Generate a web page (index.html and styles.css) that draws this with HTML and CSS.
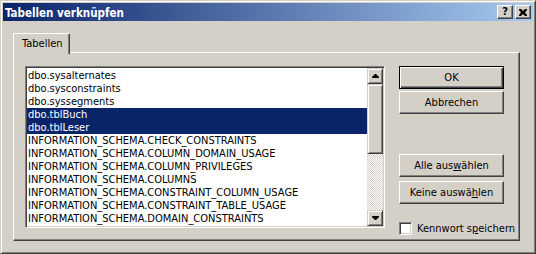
FILE: index.html
```html
<!DOCTYPE html>
<html lang="de">
<head>
<meta charset="utf-8">
<title>Tabellen verknüpfen</title>
<link rel="stylesheet" href="styles.css">
</head>
<body>
<div class="window">
  <div class="titlebar">
    <span class="title">Tabellen verknüpfen</span>
    <div class="caption-buttons">
      <span class="cap-btn help">?</span>
      <span class="cap-btn close"><svg width="8" height="7" viewBox="0 0 8 7"><path d="M0 0h2l2 2 2-2h2v1l-2 2.5 2 2.5v1h-2l-2-2-2 2h-2v-1l2-2.5-2-2.5z" fill="#000"/></svg></span>
    </div>
  </div>
  <div class="client">
    <div class="tabstrip"><div class="tab">Tabellen</div></div>
    <div class="panel">
      <div class="listbox">
        <ul class="items">
          <li>dbo.sysalternates</li>
          <li>dbo.sysconstraints</li>
          <li>dbo.syssegments</li>
          <li class="selected">dbo.tblBuch</li>
          <li class="selected">dbo.tblLeser</li>
          <li>INFORMATION_SCHEMA.CHECK_CONSTRAINTS</li>
          <li>INFORMATION_SCHEMA.COLUMN_DOMAIN_USAGE</li>
          <li>INFORMATION_SCHEMA.COLUMN_PRIVILEGES</li>
          <li>INFORMATION_SCHEMA.COLUMNS</li>
          <li>INFORMATION_SCHEMA.CONSTRAINT_COLUMN_USAGE</li>
          <li>INFORMATION_SCHEMA.CONSTRAINT_TABLE_USAGE</li>
          <li>INFORMATION_SCHEMA.DOMAIN_CONSTRAINTS</li>
        </ul>
        <div class="scrollbar">
          <div class="sb-btn"><svg width="7" height="4" viewBox="0 0 7 4"><path d="M3 0h1l3 3v1h-7v-1z" fill="#000"/></svg></div>
          <div class="sb-thumb"></div>
          <div class="sb-track"></div>
          <div class="sb-btn"><svg width="7" height="4" viewBox="0 0 7 4"><path d="M0 0h7v1l-3 3h-1l-3-3z" fill="#000"/></svg></div>
        </div>
      </div>
      <div class="side">
        <div class="btn default">OK</div>
        <div class="btn btn-cancel">Abbrechen</div>
        <div class="btn btn-all">Alle aus<u>w</u>ählen</div>
        <div class="btn btn-none">Keine auswä<u>h</u>len</div>
        <label class="check"><span class="box"></span><span class="check-label">Kennwort s<u>p</u>eichern</span></label>
      </div>
    </div>
  </div>
</div>
</body>
</html>
```

FILE: styles.css
```css
* { box-sizing: border-box; }
html, body { margin: 0; padding: 0; }
body {
  background: #d4d0c8;
  font-family: "DejaVu Sans Condensed", "DejaVu Sans", sans-serif;
  font-stretch: condensed;
  font-size: 11px;
  color: #000;
}
.window {
  width: 536px;
  height: 254px;
  border: 1px solid;
  border-color: #d4d0c8 #404040 #404040 #d4d0c8;
  box-shadow: inset 1px 1px #fff, inset -1px -1px #808080;
  padding: 2px;
  background: #d4d0c8;
}
.titlebar {
  height: 18px;
  display: flex;
  align-items: center;
  justify-content: space-between;
  padding: 0 2px;
  background: linear-gradient(to right, #0a246a, #a6caf0);
  color: #fff;
  font-weight: bold;
  font-size: 11.5px;
}
.title { padding-top: 1px; }
.caption-buttons { display: flex; gap: 2px; }
.cap-btn {
  width: 16px;
  height: 14px;
  display: flex;
  align-items: center;
  justify-content: center;
  background: #d4d0c8;
  border: 1px solid;
  border-color: #fff #404040 #404040 #fff;
  box-shadow: inset -1px -1px #808080;
  color: #000;
  font-size: 11px;
  font-weight: bold;
  line-height: 12px;
}
.client { padding: 12px 13px 0 10px; }
.tabstrip { height: 19px; display: flex; }
.tab {
  position: relative;
  z-index: 1;
  width: 57px;
  height: 21px;
  padding: 3px 0 0 8px;
  background: #d4d0c8;
  border: 1px solid;
  border-color: #fff #404040 transparent #fff;
  border-bottom: 0;
  border-radius: 2px 2px 0 0;
  box-shadow: inset -1px 0 #808080;
}
.panel {
  height: 189px;
  display: flex;
  gap: 14px;
  padding: 13px 0 0 11px;
  border: 1px solid;
  border-color: #fff #404040 #404040 #fff;
  box-shadow: inset -1px -1px #808080;
}
.listbox {
  width: 360px;
  height: 162px;
  display: flex;
  padding: 1px;
  background: #fff;
  border: 1px solid;
  border-color: #808080 #fff #fff #808080;
  box-shadow: inset 1px 1px #404040, inset -1px -1px #d4d0c8;
}
.items {
  list-style: none;
  margin: 0;
  padding: 1px 0 0;
  flex: 1;
  overflow: hidden;
}
.items li {
  height: 13px;
  line-height: 13px;
  padding-left: 1px;
  white-space: nowrap;
  overflow: hidden;
}
.items li.selected { background: #0a246a; color: #fff; }
.scrollbar { width: 16px; display: flex; flex-direction: column; }
.sb-btn, .sb-thumb {
  background: #d4d0c8;
  border: 1px solid;
  border-color: #d4d0c8 #404040 #404040 #d4d0c8;
  box-shadow: inset 1px 1px #fff, inset -1px -1px #808080;
}
.sb-btn { height: 16px; display: flex; align-items: center; justify-content: center; }
.sb-thumb { height: 70px; }
.sb-track {
  flex: 1;
  background-color: #fff;
  background-image: conic-gradient(#d4d0c8 25%, #fff 0 50%, #d4d0c8 0 75%, #fff 0);
  background-size: 2px 2px;
}
.side { width: 105px; display: flex; flex-direction: column; }
.btn {
  height: 23px;
  display: flex;
  align-items: center;
  justify-content: center;
  background: #d4d0c8;
  border: 1px solid;
  border-color: #fff #404040 #404040 #fff;
  box-shadow: inset -1px -1px #808080;
}
.btn.default {
  border-color: #000;
  box-shadow: inset 1px 1px #fff, inset -1px -1px #404040, inset -2px -2px #808080;
}
.btn-cancel { margin-top: 2px; }
.btn-all { margin-top: 40px; }
.btn-none { margin-top: 4px; }
.check {
  margin-top: 18px;
  display: flex;
  align-items: center;
  gap: 5px;
  height: 13px;
  white-space: nowrap;
}
.check-label { flex: none; }
.box {
  flex: none;
  width: 13px;
  height: 13px;
  background: #fff;
  border: 1px solid;
  border-color: #808080 #fff #fff #808080;
  box-shadow: inset 1px 1px #404040, inset -1px -1px #d4d0c8;
}
```
